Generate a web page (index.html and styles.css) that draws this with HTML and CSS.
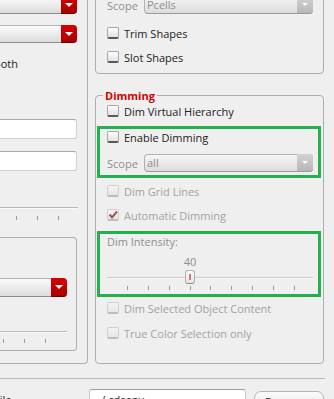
FILE: index.html
```html
<!DOCTYPE html>
<html>
<head>
<meta charset="utf-8">
<link rel="stylesheet" href="styles.css">
</head>
<body>
<div class="page">
  <div class="cols">
    <div class="left-panel">
      <div class="combo red-combo lc1"><span class="combo-text"></span><span class="red-btn"><i class="tri"></i></span></div>
      <div class="combo red-combo lc2"><span class="combo-text"></span><span class="red-btn"><i class="tri"></i></span></div>
      <div class="smooth"><span>Smooth</span></div>
      <div class="tinput ti1"></div>
      <div class="tinput ti2"></div>
      <div class="lslider ls1"><div class="groove"></div></div>
      <div class="ticks lt1"><i></i><i></i><i></i></div>
      <div class="inner-group">
        <div class="combo red-combo lc3"><span class="combo-text"></span><span class="red-btn"><i class="tri"></i></span></div>
        <div class="lslider ls2"><div class="groove"></div></div>
        <div class="ticks lt2"><i></i><i></i><i></i></div>
      </div>
    </div>
    <div class="right-col">
      <div class="group top-group">
        <div class="scope-row sr-top">
          <span class="scope-label">Scope</span>
          <div class="combo grey-combo"><span class="combo-text">Pcells</span><span class="grey-btn"><i class="tri"></i></span></div>
        </div>
        <div class="check-row cr-trim"><span class="cb"></span><span class="lbl">Trim Shapes</span></div>
        <div class="check-row cr-slot"><span class="cb"></span><span class="lbl">Slot Shapes</span></div>
      </div>
      <div class="group dim-group">
        <span class="group-title">Dimming</span>
        <div class="check-row cr-dvh"><span class="cb"></span><span class="lbl">Dim Virtual Hierarchy</span></div>
        <div class="green g1">
          <div class="check-row cr-ed"><span class="cb"></span><span class="lbl">Enable Dimming</span></div>
          <div class="scope-row sr-all">
            <span class="scope-label">Scope</span>
            <div class="combo grey-combo"><span class="combo-text">all</span><span class="grey-btn"><i class="tri"></i></span></div>
          </div>
        </div>
        <div class="check-row cr-dgl disabled"><span class="cb"></span><span class="lbl">Dim Grid Lines</span></div>
        <div class="check-row cr-ad disabled"><span class="cb checked"><svg width="12" height="12" viewBox="0 0 12 12"><path d="M2.5 5.5 L5 8.5 L10 2.5" fill="none" stroke="#a55252" stroke-width="2"/></svg></span><span class="lbl">Automatic Dimming</span></div>
        <div class="green g2">
          <div class="int-label">Dim Intensity:</div>
          <div class="int-value"><span>40</span></div>
          <div class="rslider">
            <div class="groove"></div>
            <div class="handle"><i></i></div>
          </div>
          <div class="rticks"><i class="hide"></i><i></i><i></i><i></i><i></i><i></i><i></i><i></i><i></i><i></i><i class="hide"></i></div>
        </div>
        <div class="check-row cr-dso disabled"><span class="cb"></span><span class="lbl">Dim Selected Object Content</span></div>
        <div class="check-row cr-tcs disabled"><span class="cb"></span><span class="lbl">True Color Selection only</span></div>
      </div>
    </div>
  </div>
  <div class="sep"></div>
  <div class="file-row">
    <div class="file-label">File</div>
    <div class="file-input">~/.cdsenv</div>
    <div class="browse">Browse</div>
  </div>
</div>
</body>
</html>
```

FILE: styles.css
```css
html, body {
  margin: 0;
  padding: 0;
  background: #efefef;
}
body {
  font-family: "Open Sans", "DejaVu Sans", sans-serif;
  font-size: 11px;
  color: #222;
  overflow: hidden;
}
.page {
  width: 334px;
  height: 399px;
  overflow: hidden;
}
.cols {
  display: flex;
  margin-top: -20px;
  height: 384px;
}
.left-panel {
  width: 88px;
  height: 384px;
  box-sizing: border-box;
  border-right: 1px solid #adadad;
  border-bottom: 1px solid #adadad;
  border-bottom-right-radius: 4px;
  display: flex;
  flex-direction: column;
  flex-shrink: 0;
}
.right-col {
  margin-left: 7px;
  width: 229px;
  display: flex;
  flex-direction: column;
  flex-shrink: 0;
}

/* combos */
.combo {
  display: flex;
  box-sizing: border-box;
  height: 18px;
  border-radius: 4px;
  flex-shrink: 0;
}
.combo-text {
  flex: 1;
  line-height: 16px;
  padding-left: 2px;
  overflow: hidden;
}
.red-combo {
  margin-left: -20px;
  width: 97px;
  border: 1px solid #b4b4b4;
  border-bottom-color: #8c8c8c;
  background: linear-gradient(#fbfbfb, #dcdcdc);
}
.red-btn {
  width: 16px;
  margin: -1px -1px -1px 0;
  border-radius: 0 4px 4px 0;
  background: linear-gradient(#d80000, #a80000);
  border-bottom: 1px solid #6a0000;
  display: flex;
  align-items: center;
  justify-content: center;
}
.tri {
  width: 0;
  height: 0;
  border-left: 4px solid transparent;
  border-right: 4px solid transparent;
  border-top: 4px solid #fff;
  display: block;
}
.lc1 { margin-top: 16px; }
.lc2 { margin-top: 11px; }
.lc3 { margin-top: 40px; margin-left: 0; width: 87px; height: 19px; }

.smooth {
  margin-top: 13px;
  height: 16px;
  line-height: 16px;
  width: 18px;
  display: flex;
  justify-content: flex-end;
  white-space: nowrap;
  color: #222;
}
.tinput {
  margin-left: -20px;
  width: 97px;
  height: 20px;
  box-sizing: border-box;
  background: #fff;
  border: 1px solid #d0d0d0;
  border-top-color: #a8a8a8;
  border-radius: 3px;
  flex-shrink: 0;
}
.ti1 { margin-top: 47px; }
.ti2 { margin-top: 12px; }

.lslider {
  height: 15px;
  position: relative;
  flex-shrink: 0;
}
.lslider .groove {
  margin-top: 7px;
  height: 1px;
  background: #b9b9b9;
  box-shadow: 0 1px 0 #fafafa;
}
.ls1 { margin-top: 29px; margin-left: -20px; width: 98px; }
.ls2 { margin-top: 27px; width: 87px; }

.ticks {
  display: flex;
  gap: 20px;
  height: 4px;
  flex-shrink: 0;
}
.ticks i, .rticks i {
  display: block;
  width: 1px;
  height: 4px;
  background: #9a9a9a;
}
.lt1 { margin-top: 1px; padding-left: 16px; }
.lt2 { padding-left: 23px; }

.inner-group {
  margin-top: 17px;
  margin-left: -20px;
  width: 97px;
  height: 114px;
  box-sizing: border-box;
  border: 1px solid #adadad;
  border-left: none;
  border-radius: 0 4px 4px 0;
  display: flex;
  flex-direction: column;
  flex-shrink: 0;
}

/* right groups */
.group {
  box-sizing: border-box;
  border: 1px solid #adadad;
  border-radius: 4px;
  display: flex;
  flex-direction: column;
  flex-shrink: 0;
  position: relative;
}
.top-group {
  height: 94px;
  padding-left: 11px;
}
.dim-group {
  margin-top: 21px;
  height: 269px;
}
.group-title {
  position: absolute;
  top: -8px;
  left: 7px;
  padding: 0 2px;
  background: #efefef;
  color: #d40000;
  font-weight: bold;
  line-height: 15px;
}

.scope-row {
  display: flex;
  align-items: center;
  height: 18px;
  flex-shrink: 0;
}
.scope-label {
  width: 37px;
  color: #8e8e8e;
}
.grey-combo {
  width: 169px;
  border: 1px solid #b0b0b0;
  border-bottom-color: #9a9a9a;
  background: linear-gradient(#f6f6f6, #dcdcdc);
  color: #8e8e8e;
}
.grey-btn {
  width: 16px;
  margin: -1px -1px -1px 0;
  border-radius: 0 4px 4px 0;
  background: linear-gradient(#d2d2d2, #b8b8b8);
  border-bottom: 1px solid #9a9a9a;
  display: flex;
  align-items: center;
  justify-content: center;
}
.grey-btn .tri {
  border-left-width: 3px;
  border-right-width: 3px;
  border-top-width: 3px;
}
.sr-top { margin-top: 15px; }

.check-row {
  display: flex;
  align-items: center;
  height: 20px;
  flex-shrink: 0;
}
.dim-group > .check-row { padding-left: 11px; }
.cb {
  width: 12px;
  height: 12px;
  box-sizing: border-box;
  border: 1px solid #a6a6a6;
  border-bottom: 2px solid #5a5a5a;
  border-radius: 2px;
  background: linear-gradient(#fdfdfd, #e2e2e2);
  margin-right: 5px;
  flex-shrink: 0;
  position: relative;
}
.cb svg {
  position: absolute;
  left: -1px;
  top: -1px;
}
.disabled .cb {
  border-color: #cfcfcf;
  border-bottom-color: #bdbdbd;
  background: linear-gradient(#f4f4f4, #e6e6e6);
}
.disabled .lbl { color: #a2a2a2; }

.cr-trim { margin-top: 9px; }
.cr-slot { margin-top: 4px; }
.cr-dvh { margin-top: 5px; }
.cr-ed { height: 16px; }
.cr-dgl { margin-top: 3px; }
.cr-ad { margin-top: 4px; }
.cr-dso { margin-top: 1px; }
.cr-tcs { margin-top: 5px; }

.green {
  margin-left: 1px;
  width: 224px;
  box-sizing: border-box;
  border: 3px solid #22b14c;
  padding-left: 7px;
  display: flex;
  flex-direction: column;
  flex-shrink: 0;
}
.g1 { margin-top: 5px; height: 52px; }
.sr-all { margin-top: 9px; }
.g2 { margin-top: 6px; height: 66px; }

.int-label {
  height: 16px;
  line-height: 16px;
  color: #8e8e8e;
}
.int-value {
  margin-top: 5px;
  height: 14px;
  line-height: 14px;
  color: #8e8e8e;
  padding-left: 78px;
  width: 10px;
  display: flex;
  justify-content: center;
  white-space: nowrap;
}
.rslider {
  width: 206px;
  height: 15px;
  position: relative;
  flex-shrink: 0;
}
.rslider .groove {
  margin-top: 8px;
  height: 1px;
  background: #c9c9c9;
  box-shadow: 0 1px 0 #fafafa;
}
.handle {
  position: absolute;
  left: 78px;
  top: 1px;
  width: 10px;
  height: 14px;
  box-sizing: border-box;
  border: 1px solid #b0b0b0;
  border-bottom-color: #8c8c8c;
  border-radius: 3px;
  background: linear-gradient(#fbfbfb, #e4e4e4);
  display: flex;
  justify-content: center;
  align-items: center;
}
.handle i {
  display: block;
  width: 2px;
  height: 6px;
  background: #d67a7a;
}
.rticks {
  margin-top: 2px;
  margin-left: -1px;
  width: 210px;
  height: 4px;
  display: flex;
  justify-content: space-between;
}
.rticks i.hide { background: transparent; }

.sep {
  margin-top: 14px;
  width: 325px;
  height: 1px;
  background: #b9b9b9;
}
.file-row {
  margin-top: 10px;
  display: flex;
  align-items: flex-start;
}
.file-label {
  width: 89px;
  text-indent: -6px;
  line-height: 16px;
  margin-top: 3px;
  flex-shrink: 0;
}
.file-input {
  width: 157px;
  height: 22px;
  box-sizing: border-box;
  background: #fff;
  border: 1px solid #c8c8c8;
  border-top-color: #a0a0a0;
  border-radius: 3px;
  padding-left: 5px;
  line-height: 20px;
  flex-shrink: 0;
}
.browse {
  margin-left: 8px;
  margin-top: 2px;
  width: 70px;
  height: 22px;
  box-sizing: border-box;
  border: 1px solid #b4b4b4;
  border-radius: 7px;
  background: linear-gradient(#fbfbfb, #e2e2e2);
  padding-left: 10px;
  line-height: 20px;
  flex-shrink: 0;
}
```
